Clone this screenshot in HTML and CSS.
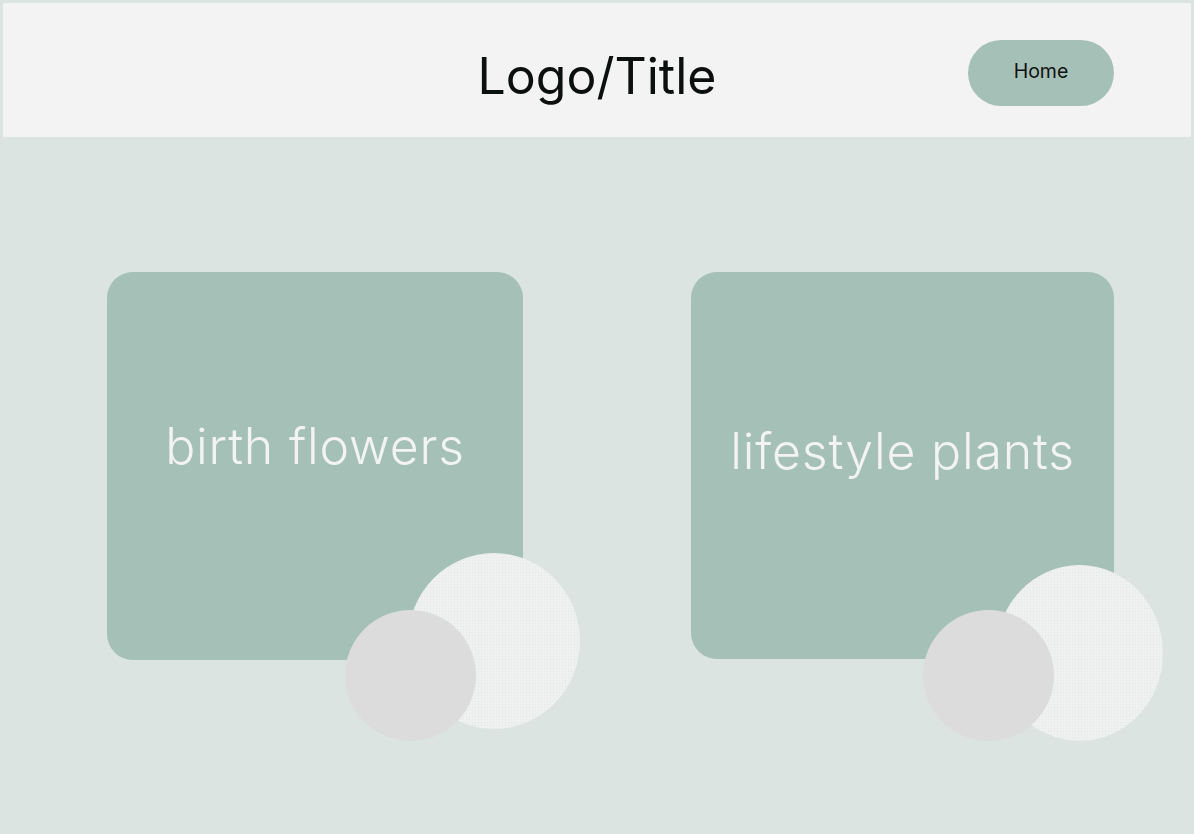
FILE: index.html
```html
<!DOCTYPE html>
<html lang="en">
<head>
<meta charset="utf-8">
<title>Logo/Title</title>
<link rel="stylesheet" href="styles.css">
</head>
<body>
<div class="page">
  <header class="header">
    <div class="header-spacer"></div>
    <h1 class="title">Logo/Title</h1>
    <nav class="nav"><a class="home-btn" href="#">Home</a></nav>
  </header>
  <main class="main">
    <section class="card card-birth">
      <h2 class="card-label label-birth">birth flowers</h2>
      <span class="blob blob-light blob-light-1"></span>
      <span class="blob blob-gray blob-gray-1"></span>
    </section>
    <section class="card card-life">
      <h2 class="card-label label-life">lifestyle plants</h2>
      <span class="blob blob-light blob-light-2"></span>
      <span class="blob blob-gray blob-gray-2"></span>
    </section>
  </main>
</div>
</body>
</html>
```

FILE: styles.css
```css
* { box-sizing: border-box; }
html, body {
  margin: 0;
  padding: 0;
  background: #dbe4e1;
}
body {
  font-family: Inter, "Noto Sans", "Liberation Sans", sans-serif;
  width: 1194px;
  height: 834px;
  overflow: hidden;
}
.page {
  padding: 3px;
  height: 834px;
}
.header {
  height: 134px;
  background: #f3f3f3;
  display: grid;
  grid-template-columns: 1fr auto 1fr;
  align-items: center;
}
.title {
  margin: 0;
  font-weight: 400;
  font-size: 50px;
  color: #0b0f0d;
  letter-spacing: 0;
  line-height: 1;
  padding-top: 12px;
}
.nav {
  display: flex;
  justify-content: flex-end;
  padding-right: 77px;
  padding-top: 5px;
}
.home-btn {
  width: 146px;
  height: 66px;
  border-radius: 33px;
  background: #a4c0b7;
  color: #111;
  text-decoration: none;
  font-size: 19.5px;
  display: flex;
  align-items: center;
  justify-content: center;
  padding-bottom: 4px;
}
.main {
  display: flex;
  align-items: flex-start;
  padding: 135px 0 0 104px;
  gap: 168px;
}
.card {
  position: relative;
  background: #a4c0b7;
  border-radius: 26px;
  display: flex;
  justify-content: center;
}
.card-birth { width: 416px; height: 388px; }
.card-life { width: 423px; height: 387px; }
.card-label {
  margin: 0;
  font-weight: 300;
  font-size: 50px;
  line-height: 1;
  color: #f2f3f2;
  letter-spacing: 0.8px;
}
.label-birth { padding-top: 149px; }
.label-life { padding-top: 154px; }
.blob {
  position: absolute;
  border-radius: 50%;
}
.blob-light {
  background-color: #eef1f0;
  background-image: radial-gradient(circle, #e2e7e5 0.6px, transparent 0.9px);
  background-size: 3px 3px;
}
.blob-gray {
  background: #dcdcdc;
  width: 131px;
  height: 131px;
  top: 338px;
}
.blob-light-1 { left: 301px; top: 281px; width: 172px; height: 176px; }
.blob-gray-1 { left: 238px; }
.blob-light-2 { left: 305px; top: 293px; width: 167px; height: 176px; }
.blob-gray-2 { left: 232px; }
```
